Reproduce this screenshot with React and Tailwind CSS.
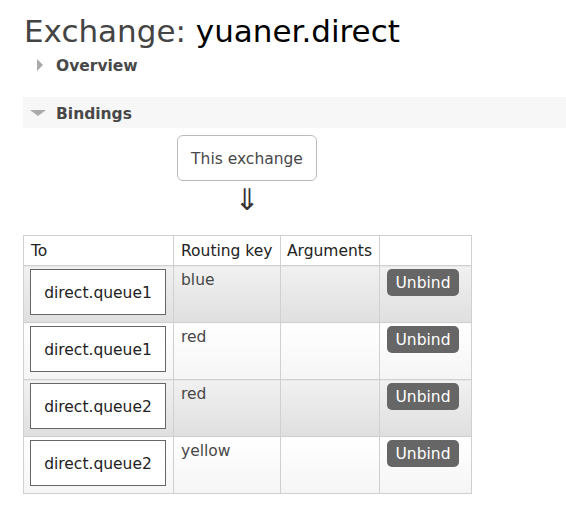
import React from "react";

const rows = [
  { q: "direct.queue1", key: "blue" },
  { q: "direct.queue1", key: "red" },
  { q: "direct.queue2", key: "red" },
  { q: "direct.queue2", key: "yellow" },
];

export default function App() {
  return (
    <div
      className="w-[566px] h-[514px] overflow-hidden bg-white text-[#484848]"
      style={{ fontFamily: '"DejaVu Sans", Verdana, sans-serif' }}
    >
      <h1 className="pl-[24px] pt-[12px] text-[31px] leading-[38px] text-[#444]">
        Exchange: <span className="text-black">yuaner.direct</span>
      </h1>
      <div className="flex items-center pl-[37px] h-[24px] mt-[3px]">
        <span className="w-0 h-0 border-y-[6px] border-y-transparent border-l-[6px] border-l-[#aaa]" />
        <span className="ml-[13px] mt-[3px] text-[15.5px] font-bold text-[#484848]">Overview</span>
      </div>
      <div className="ml-[23px] mt-[20px] h-[31px] bg-[#f7f7f7] flex items-center pl-[7px]">
        <span className="w-0 h-0 border-x-[8px] border-x-transparent border-t-[6px] border-t-[#aaa]" />
        <span className="ml-[10px] mt-[4px] text-[15.5px] font-bold text-[#484848]">Bindings</span>
      </div>
      <div className="flex flex-col items-center w-[140px] ml-[177px] mt-[7px]">
        <div className="w-[140px] h-[46px] pt-[4px] border border-[#bbb] rounded-[6px] flex items-center justify-center text-[15.5px] text-[#484848]">
          This exchange
        </div>
        <div className="mt-[1px] text-[30px] leading-[36px] text-[#333]">⇓</div>
      </div>
      <table className="ml-[23px] mt-[17px] border-collapse text-[15.5px] table-fixed w-[449px]">
        <colgroup>
          <col className="w-[150px]" />
          <col className="w-[107px]" />
          <col className="w-[99px]" />
          <col className="w-[92px]" />
        </colgroup>
        <thead>
          <tr className="h-[30px] text-[#222]">
            <th className="border border-[#d0d0d0] text-left font-normal px-[7px] pt-[2px]">To</th>
            <th className="border border-[#d0d0d0] text-left font-normal px-[7px] pt-[2px]">Routing key</th>
            <th className="border border-[#d0d0d0] text-left font-normal px-[6px] pt-[2px]">Arguments</th>
            <th className="border border-[#d0d0d0]"></th>
          </tr>
        </thead>
        <tbody>
          {rows.map((r, i) => {
            const bg =
              i % 2 === 0
                ? "bg-linear-to-b from-[#f1f1f1] to-[#dfdfdf]"
                : "bg-linear-to-b from-white to-[#f5f5f5]";
            return (
              <tr key={i} className="h-[57px]">
                <td className={`border border-[#d0d0d0] align-top pl-[6px] pr-[6px] pt-[3px] ${bg}`}>
                  <div className="w-[136px] h-[46px] pt-[3px] border border-[#666] bg-white flex items-center justify-center text-[15.5px] text-[#222]">
                    {r.q}
                  </div>
                </td>
                <td className={`border border-[#d0d0d0] align-top px-[7px] pt-[4px] leading-[20px] ${bg}`}>
                  {r.key}
                </td>
                <td className={`border border-[#d0d0d0] ${bg}`}></td>
                <td className={`border border-[#d0d0d0] align-top pl-[7px] pt-[3px] ${bg}`}>
                  <div className="w-[72px] h-[27px] pt-[3px] rounded-[5px] bg-[#666] text-white flex items-center justify-center text-[15.5px]">
                    Unbind
                  </div>
                </td>
              </tr>
            );
          })}
        </tbody>
      </table>
    </div>
  );
}
